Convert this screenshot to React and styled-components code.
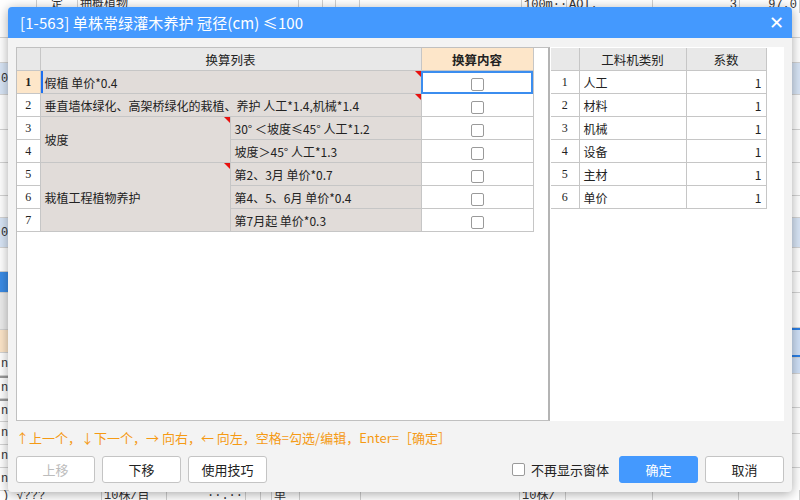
import React from 'react';
import styled, { createGlobalStyle } from 'styled-components';

const GlobalStyle = createGlobalStyle`
  html, body {
    margin: 0;
    padding: 0;
    background: #ffffff;
    font-family: "Noto Sans CJK SC", "Noto Sans", sans-serif;
  }
`;

const palette = {
  blue: '#4499fe',
  line: '#c6c6c6',
  cell: '#e1dcd9',
  peach: '#fde6c9',
  head: '#e8e8e8',
  orange: '#f59a14',
};

// background sheet, only the edges show around the dialog
const leftRows = [
  { h: 25, bg: '#fff' }, { h: 25, bg: '#fff' }, { h: 32, bg: '#d8e5f6', t: '01' },
  { h: 35, bg: '#fff' }, { h: 33, bg: '#fff' }, { h: 33, bg: '#fff' },
  { h: 22, bg: '#fff' }, { h: 30, bg: '#d8e5f6', t: '01' }, { h: 24, bg: '#fff' },
  { h: 21, bg: '#3b8ce6' }, { h: 37, bg: '#ececec' }, { h: 23, bg: '#fde6c9' },
  { h: 23, bg: '#fff', t: 'n,' }, { h: 23, bg: '#fff', t: 'n,', thick: true },
  { h: 23, bg: '#fff', t: 'n,', thick: true }, { h: 23, bg: '#fff', t: 'n,' },
  { h: 23, bg: '#fff', t: 'n,' }, { h: 23, bg: '#fff', t: 'n,' },
];

const rightRows = [
  { h: 25, t: '.9' }, { h: 25, t: '.8' }, { h: 32, bg: '#d8e5f6', t: '.5' },
  { h: 35, t: '.1' }, { h: 33, t: '.3' }, { h: 33, t: '.9' }, { h: 22, t: '.4' },
  { h: 30, bg: '#d8e5f6', t: '.2' }, { h: 24, t: '.0' }, { h: 21, t: '.2' },
  { h: 35, t: '.4' }, { h: 30, bg: '#cfe0f7', t: '.8', sel: true },
  { h: 16, bg: '#cfe0f7', t: '4.' }, { h: 34, t: '.6' }, { h: 26, t: '.3' },
  { h: 34, t: '.0' },
];

const Sheet = styled.div`
  position: relative;
  width: 800px;
  height: 500px;
  overflow: hidden;
  display: flex;
  flex-direction: column;
  font-family: "Liberation Mono", "Noto Sans CJK SC", monospace;
  font-size: 12px;
  color: #333;
`;

const EdgeRow = styled.div`
  display: grid;
  grid-template-columns: ${(p) => p.cols};
  height: ${(p) => p.h}px;
  flex: none;
`;

const EdgeCell = styled.div`
  border-right: 1px solid #d0d0d0;
  line-height: ${(p) => p.lh || 12}px;
  text-align: ${(p) => p.align || 'left'};
  padding: 0 2px;
  white-space: nowrap;
  overflow: hidden;
`;

const SheetMiddle = styled.div`
  flex: 1;
  display: flex;
  justify-content: space-between;
  min-height: 0;
`;

const Stack = styled.div`
  width: 40px;
  display: flex;
  flex-direction: column;
  align-items: ${(p) => (p.right ? 'flex-end' : 'flex-start')};
`;

const StackRow = styled.div`
  flex: none;
  width: 40px;
  height: ${(p) => p.h}px;
  background: ${(p) => p.bg || '#fff'};
  border-bottom: 1px solid #d4d4d4;
  border-top: ${(p) => (p.thick ? '2px solid #9a9a9a' : 'none')};
  ${(p) => p.sel && 'box-shadow: inset 0 2px 0 #2b7fe6, inset 0 -2px 0 #2b7fe6;'}
  box-sizing: border-box;
  display: flex;
  align-items: center;
  justify-content: ${(p) => (p.right ? 'flex-end' : 'flex-start')};
  padding: 0 1px;
`;

// dialog
const Dialog = styled.div`
  position: absolute;
  left: 8px;
  top: 7px;
  width: 784px;
  height: 485px;
  background: #f3f3f3;
  border-radius: 4px;
  box-shadow: 0 2px 12px rgba(0, 0, 0, 0.35);
  display: flex;
  flex-direction: column;
  overflow: hidden;
  font-family: "Noto Sans CJK SC", "Noto Sans", sans-serif;
`;

const TitleBar = styled.div`
  height: 31px;
  flex: none;
  background: ${palette.blue};
  display: flex;
  align-items: center;
  justify-content: space-between;
  padding: 0 8px 0 12px;
  color: #fff;
`;

const Title = styled.div`
  font-size: 15px;
  letter-spacing: 0.1px;
`;

const Close = styled.div`
  font-size: 18px;
  font-weight: bold;
  line-height: 1;
  font-family: "DejaVu Sans", sans-serif;
`;

const Body = styled.div`
  flex: 1;
  display: flex;
  flex-direction: column;
  padding: 9px 8px 0 8px;
`;

const Main = styled.div`
  height: 374px;
  display: flex;
  flex: none;
`;

const LeftPanel = styled.div`
  width: 534px;
  box-sizing: border-box;
  background: #fff;
  border: 1px solid #c0c0c0;
  border-right: 2px solid #b4b4b4;
`;

const RightPanel = styled.div`
  flex: 1;
  background: #fff;
  padding: 1px 0 0 1px;
  height: 373px;
`;

const Grid = styled.table`
  border-collapse: collapse;
  table-layout: fixed;
  font-size: 12px;
  color: #222;
`;

const Th = styled.th`
  height: 22px;
  padding: 0;
  font-weight: ${(p) => (p.bold ? 'bold' : 'normal')};
  font-size: 12.5px;
  background: ${(p) => p.bg || palette.head};
  border: 1px solid ${palette.line};
  border-top: none;
  color: #222;
`;

const Td = styled.td`
  position: relative;
  height: 22px;
  padding: 0 4px;
  border: 1px solid ${palette.line};
  background: ${(p) => p.bg || '#fff'};
  text-align: ${(p) => p.align || 'left'};
  white-space: nowrap;
  overflow: visible;
  ${(p) => p.selected && 'outline: 2px solid #3b8def; outline-offset: -2px;'}
  ${(p) => p.marker && 'box-shadow: inset 2px 0 0 #1d6ff0;'}
`;

const Num = styled.td`
  height: 22px;
  padding: 0;
  border: 1px solid ${palette.line};
  border-left: none;
  background: ${(p) => (p.active ? palette.peach : '#fff')};
  font-weight: ${(p) => (p.active ? 'bold' : 'normal')};
  text-align: center;
  font-size: 12px;
  font-family: "Liberation Serif", "Noto Sans CJK SC", serif;
`;

const Flag = styled.span`
  position: absolute;
  top: 0;
  right: 0;
  width: 0;
  height: 0;
  border-top: 6px solid #e8110f;
  border-left: 6px solid transparent;
`;

const Box = styled.span`
  display: inline-block;
  vertical-align: middle;
  width: 13px;
  height: 13px;
  box-sizing: border-box;
  border: 1px solid #9a9a9a;
  border-radius: 2px;
  background: #fff;
`;

const Hint = styled.div`
  margin-top: 9px;
  font-size: 13px;
  line-height: 16px;
  color: ${palette.orange};
  white-space: nowrap;
`;

const Footer = styled.div`
  margin-top: 10px;
  display: flex;
  align-items: center;
  gap: 7px;
`;

const Button = styled.button`
  width: 79px;
  height: 27px;
  box-sizing: border-box;
  border: 1px solid ${(p) => (p.primary ? palette.blue : '#c4c4c4')};
  border-radius: 3px;
  background: ${(p) => (p.primary ? palette.blue : '#fff')};
  color: ${(p) => (p.primary ? '#fff' : p.disabled ? '#bcbcbc' : '#222')};
  font-family: "Noto Sans CJK SC", sans-serif;
  font-size: 13px;
  padding: 0;
`;

const Spacer = styled.div`
  flex: 1;
`;

const CheckLabel = styled.label`
  display: flex;
  align-items: center;
  gap: 6px;
  font-size: 13px;
  color: #222;
  margin-right: 3px;
`;

const leftRowsData = [
  { n: 1, text: '假植 单价*0.4', flag: true, span: 'full' },
  { n: 2, text: '垂直墙体绿化、高架桥绿化的栽植、养护 人工*1.4,机械*1.4', flag: true, span: 'full' },
  { n: 3, group: '坡度', rows: 2, text: '30° ＜坡度≤45°  人工*1.2' },
  { n: 4, text: '坡度＞45°  人工*1.3' },
  { n: 5, group: '栽植工程植物养护', rows: 3, text: '第2、3月 单价*0.7' },
  { n: 6, text: '第4、5、6月 单价*0.4' },
  { n: 7, text: '第7月起 单价*0.3' },
];

const resources = ['人工', '材料', '机械', '设备', '主材', '单价'];

const App = () => (
  <Sheet>
    <GlobalStyle />
    <EdgeRow h={13} cols="37px 41px 221px 24px 13px 24px 162px 45px 86px 87px 60px">
      <EdgeCell />
      <EdgeCell align="center" lh={10}>定</EdgeCell>
      <EdgeCell lh={10}>抽概植物</EdgeCell>
      <EdgeCell />
      <EdgeCell />
      <EdgeCell />
      <EdgeCell />
      <EdgeCell lh={10}>100m···</EdgeCell>
      <EdgeCell lh={10}>AOI.</EdgeCell>
      <EdgeCell align="right" lh={10}>3</EdgeCell>
      <EdgeCell align="right" lh={10}>97.0</EdgeCell>
    </EdgeRow>
    <SheetMiddle>
      <Stack>
        {leftRows.map((r, i) => (
          // eslint-disable-next-line react/no-array-index-key
          <StackRow key={i} h={r.h} bg={r.bg} thick={r.thick}>{r.t}</StackRow>
        ))}
      </Stack>
      <Stack right>
        {rightRows.map((r, i) => (
          // eslint-disable-next-line react/no-array-index-key
          <StackRow key={i} h={r.h} bg={r.bg} sel={r.sel}>{r.t}</StackRow>
        ))}
      </Stack>
    </SheetMiddle>
    <EdgeRow h={10} cols="102px 65px 79px 15px 11px 28px 61px 159px 46px 87px 86px 61px">
      <EdgeCell>) √???</EdgeCell>
      <EdgeCell>10株/目</EdgeCell>
      <EdgeCell align="right">··.··</EdgeCell>
      <EdgeCell />
      <EdgeCell />
      <EdgeCell>单</EdgeCell>
      <EdgeCell />
      <EdgeCell />
      <EdgeCell>10株/</EdgeCell>
      <EdgeCell />
      <EdgeCell />
      <EdgeCell />
    </EdgeRow>

    <Dialog>
      <TitleBar>
        <Title>[1-563] 单株常绿灌木养护 冠径(cm) ≤100</Title>
        <Close>✕</Close>
      </TitleBar>
      <Body>
        <Main>
          <LeftPanel>
            <Grid style={{ width: 516 }}>
              <colgroup>
                <col style={{ width: 23 }} />
                <col style={{ width: 190 }} />
                <col style={{ width: 191 }} />
                <col style={{ width: 112 }} />
              </colgroup>
              <thead>
                <tr>
                  <Th style={{ borderLeft: 'none' }} />
                  <Th colSpan={2}>换算列表</Th>
                  <Th bold bg={palette.peach}>换算内容</Th>
                </tr>
              </thead>
              <tbody>
                {leftRowsData.map((r) => (
                  <tr key={r.n}>
                    <Num active={r.n === 1}>{r.n}</Num>
                    {r.span === 'full' && (
                      <Td colSpan={2} bg={palette.cell} marker={r.n === 1}>
                        {r.text}
                        {r.flag && <Flag />}
                      </Td>
                    )}
                    {r.group && (
                      <Td rowSpan={r.rows} bg={palette.cell}>
                        {r.group}
                        <Flag />
                      </Td>
                    )}
                    {!r.span && <Td bg={palette.cell}>{r.text}</Td>}
                    <Td align="center" selected={r.n === 1}>
                      <Box />
                    </Td>
                  </tr>
                ))}
              </tbody>
            </Grid>
          </LeftPanel>
          <RightPanel>
            <Grid style={{ width: 215 }}>
              <colgroup>
                <col style={{ width: 28 }} />
                <col style={{ width: 107 }} />
                <col style={{ width: 80 }} />
              </colgroup>
              <thead>
                <tr>
                  <Th style={{ borderLeft: 'none' }} />
                  <Th>工料机类别</Th>
                  <Th>系数</Th>
                </tr>
              </thead>
              <tbody>
                {resources.map((name, i) => (
                  <tr key={name}>
                    <Num>{i + 1}</Num>
                    <Td>{name}</Td>
                    <Td align="right">1</Td>
                  </tr>
                ))}
              </tbody>
            </Grid>
          </RightPanel>
        </Main>
        <Hint>↑上一个，↓下一个，→ 向右，← 向左，空格=勾选/编辑，Enter=［确定］</Hint>
        <Footer>
          <Button disabled>上移</Button>
          <Button>下移</Button>
          <Button>使用技巧</Button>
          <Spacer />
          <CheckLabel>
            <Box />
            不再显示窗体
          </CheckLabel>
          <Button primary>确定</Button>
          <Button>取消</Button>
        </Footer>
      </Body>
    </Dialog>
  </Sheet>
);

export default App;
